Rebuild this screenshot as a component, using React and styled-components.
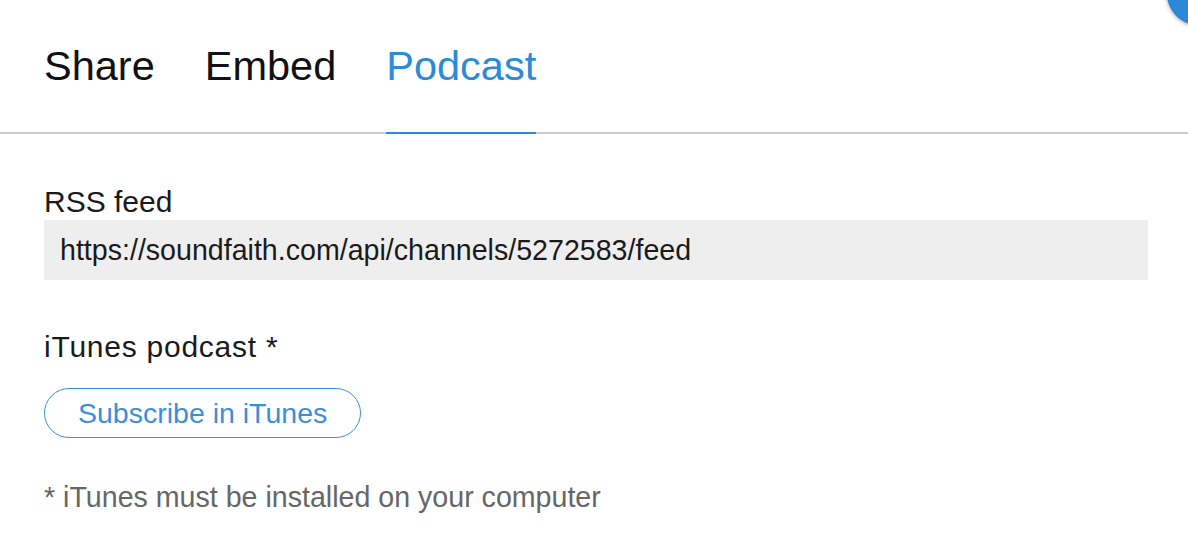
import React, { useState } from 'react'
import styled, { createGlobalStyle } from 'styled-components'

const GlobalStyle = createGlobalStyle`
  html, body {
    margin: 0;
    padding: 0;
    background: #ffffff;
    overflow: hidden;
  }
  body {
    font-family: "Liberation Sans", Arial, sans-serif;
    color: #1a1a1a;
  }
`

const Page = styled.div`
  position: relative;
  width: 1188px;
  height: 560px;
  overflow: hidden;
  background: #fff;
`

const FabEdge = styled.div`
  position: absolute;
  top: -37px;
  right: -41px;
  width: 62px;
  height: 62px;
  border-radius: 50%;
  background: #2b88d8;
  box-shadow: 0 1px 4px rgba(0, 0, 0, 0.35);
`

const TabBar = styled.nav`
  display: flex;
  gap: 50px;
  padding: 0 44px;
  border-bottom: 2px solid #cccccc;
`

const Tab = styled.button`
  font-family: inherit;
  font-size: 41.5px;
  line-height: 48px;
  background: none;
  border: 0;
  border-bottom: 2px solid ${p => (p.$active ? '#2a8bd8' : 'transparent')};
  margin: 0 0 -2px;
  padding: 42px 0 42px;
  color: ${p => (p.$active ? '#2a8bd8' : '#111111')};
  cursor: pointer;
`

const Content = styled.div`
  padding: 50px 40px 0 44px;
`

const Field = styled.section`
  display: flex;
  flex-direction: column;
  align-items: flex-start;

  & + & {
    margin-top: 49px;
  }
`

const Label = styled.div`
  font-size: 30px;
  line-height: 35px;
  letter-spacing: ${p => p.$spacing || 0}px;
  color: #1a1a1a;
  margin-bottom: 1px;
`

const UrlBox = styled.div`
  align-self: stretch;
  height: 60px;
  line-height: 60px;
  background: #eeeeee;
  padding: 0 16px;
  font-size: 28.6px;
  color: #1a1a1a;
  white-space: nowrap;
`

const PillButton = styled.button`
  margin-top: 23px;
  height: 50px;
  padding: 0 33px;
  border: 1.5px solid #3a8fd9;
  border-radius: 25px;
  background: #fff;
  color: #3a8fd9;
  font-family: inherit;
  font-size: 28.5px;
  display: flex;
  align-items: center;
  cursor: pointer;
`

const Note = styled.p`
  margin: 43px 0 0;
  font-size: 28.6px;
  line-height: 33px;
  color: #666666;
`

const tabs = ['Share', 'Embed', 'Podcast']

export default function App() {
  const [active, setActive] = useState('Podcast')

  return (
    <>
      <GlobalStyle />
      <Page>
        <FabEdge />
        <TabBar>
          {tabs.map(t => (
            <Tab key={t} $active={t === active} onClick={() => setActive(t)}>
              {t}
            </Tab>
          ))}
        </TabBar>
        <Content>
          <Field>
            <Label>RSS feed</Label>
            <UrlBox>https://soundfaith.com/api/channels/5272583/feed</UrlBox>
          </Field>
          <Field>
            <Label $spacing={0.75}>iTunes podcast *</Label>
            <PillButton>Subscribe in iTunes</PillButton>
            <Note>* iTunes must be installed on your computer</Note>
          </Field>
        </Content>
      </Page>
    </>
  )
}
